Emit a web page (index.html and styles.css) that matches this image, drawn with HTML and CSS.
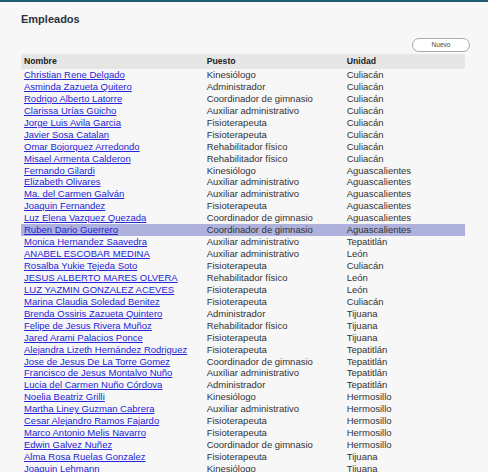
FILE: index.html
```html
<!DOCTYPE html>
<html lang="es">
<head>
<meta charset="utf-8">
<title>Empleados</title>
<link rel="stylesheet" href="styles.css">
</head>
<body>
<div class="topbar"></div>
<main class="content">
  <h1 class="title">Empleados</h1>
  <div class="toolbar"><button class="btn" type="button">Nuevo</button></div>
  <div class="grid">
    <div class="row head"><div>Nombre</div><div>Puesto</div><div>Unidad</div></div>
    <div class="row"><div><a href="#">Christian Rene Delgado</a></div><div>Kinesiólogo</div><div>Culiacán</div></div>
    <div class="row"><div><a href="#">Asminda Zazueta Quitero</a></div><div>Administrador</div><div>Culiacán</div></div>
    <div class="row"><div><a href="#">Rodrigo Alberto Latorre</a></div><div>Coordinador de gimnasio</div><div>Culiacán</div></div>
    <div class="row"><div><a href="#">Clarissa Urías Güicho</a></div><div>Auxiliar administrativo</div><div>Culiacán</div></div>
    <div class="row"><div><a href="#">Jorge Luis Avila Garcia</a></div><div>Fisioterapeuta</div><div>Culiacán</div></div>
    <div class="row"><div><a href="#">Javier Sosa Catalan</a></div><div>Fisioterapeuta</div><div>Culiacán</div></div>
    <div class="row"><div><a href="#">Omar Bojorquez Arredondo</a></div><div>Rehabilitador físico</div><div>Culiacán</div></div>
    <div class="row"><div><a href="#">Misael Armenta Calderon</a></div><div>Rehabilitador físico</div><div>Culiacán</div></div>
    <div class="row"><div><a href="#">Fernando Gilardi</a></div><div>Kinesiólogo</div><div>Aguascalientes</div></div>
    <div class="row"><div><a href="#">Elizabeth Olivares</a></div><div>Auxiliar administrativo</div><div>Aguascalientes</div></div>
    <div class="row"><div><a href="#">Ma. del Carmen Galván</a></div><div>Auxiliar administrativo</div><div>Aguascalientes</div></div>
    <div class="row"><div><a href="#">Joaquin Fernandez</a></div><div>Fisioterapeuta</div><div>Aguascalientes</div></div>
    <div class="row"><div><a href="#">Luz Elena Vazquez Quezada</a></div><div>Coordinador de gimnasio</div><div>Aguascalientes</div></div>
    <div class="row selected"><div><a href="#">Ruben Dario Guerrero</a></div><div>Coordinador de gimnasio</div><div>Aguascalientes</div></div>
    <div class="row"><div><a href="#">Monica Hernandez Saavedra</a></div><div>Auxiliar administrativo</div><div>Tepatitlán</div></div>
    <div class="row"><div><a href="#">ANABEL ESCOBAR MEDINA</a></div><div>Auxiliar administrativo</div><div>León</div></div>
    <div class="row"><div><a href="#">Rosalba Yukie Tejeda Soto</a></div><div>Fisioterapeuta</div><div>Culiacán</div></div>
    <div class="row"><div><a href="#">JESUS ALBERTO MARES OLVERA</a></div><div>Rehabilitador físico</div><div>León</div></div>
    <div class="row"><div><a href="#">LUZ YAZMIN GONZALEZ ACEVES</a></div><div>Fisioterapeuta</div><div>León</div></div>
    <div class="row"><div><a href="#">Marina Claudia Soledad Benitez</a></div><div>Fisioterapeuta</div><div>Culiacán</div></div>
    <div class="row"><div><a href="#">Brenda Ossiris Zazueta Quintero</a></div><div>Administrador</div><div>Tijuana</div></div>
    <div class="row"><div><a href="#">Felipe de Jesus Rivera Muñoz</a></div><div>Rehabilitador físico</div><div>Tijuana</div></div>
    <div class="row"><div><a href="#">Jared Arami Palacios Ponce</a></div><div>Fisioterapeuta</div><div>Tijuana</div></div>
    <div class="row"><div><a href="#">Alejandra Lizeth Hernández Rodriguez</a></div><div>Fisioterapeuta</div><div>Tepatitlán</div></div>
    <div class="row"><div><a href="#">Jose de Jesus De La Torre Gomez</a></div><div>Coordinador de gimnasio</div><div>Tepatitlán</div></div>
    <div class="row"><div><a href="#">Francisco de Jesus Montalvo Nuño</a></div><div>Auxiliar administrativo</div><div>Tepatitlán</div></div>
    <div class="row"><div><a href="#">Lucia del Carmen Nuño Córdova</a></div><div>Administrador</div><div>Tepatitlán</div></div>
    <div class="row"><div><a href="#">Noelia Beatriz Grilli</a></div><div>Kinesiólogo</div><div>Hermosillo</div></div>
    <div class="row"><div><a href="#">Martha Liney Guzman Cabrera</a></div><div>Auxiliar administrativo</div><div>Hermosillo</div></div>
    <div class="row"><div><a href="#">Cesar Alejandro Ramos Fajardo</a></div><div>Fisioterapeuta</div><div>Hermosillo</div></div>
    <div class="row"><div><a href="#">Marco Antonio Melis Navarro</a></div><div>Fisioterapeuta</div><div>Hermosillo</div></div>
    <div class="row"><div><a href="#">Edwin Galvez Nuñez</a></div><div>Coordinador de gimnasio</div><div>Hermosillo</div></div>
    <div class="row"><div><a href="#">Alma Rosa Ruelas Gonzalez</a></div><div>Fisioterapeuta</div><div>Tijuana</div></div>
    <div class="row"><div><a href="#">Joaquin Lehmann</a></div><div>Kinesiólogo</div><div>Tijuana</div></div>
  </div>
</main>
</body>
</html>
```

FILE: styles.css
```css
html, body {
  margin: 0;
  padding: 0;
  background: #f7f7f7;
  font-family: "Liberation Sans", Arial, sans-serif;
  color: #333;
}

.topbar {
  height: 2px;
  background: #1f5b73;
}

.content {
  padding: 0 18px 0 21px;
}

.title {
  margin: 11px 0 0 0;
  font-size: 11px;
  line-height: 13px;
  font-weight: bold;
  color: #2b3240;
}

.toolbar {
  display: flex;
  justify-content: flex-end;
  margin-top: 12px;
  height: 14px;
}

.btn {
  box-sizing: border-box;
  width: 58px;
  height: 14px;
  padding: 0;
  border: 1px solid #a8a8a8;
  border-radius: 7px;
  background: #fff;
  font-family: "Liberation Sans", Arial, sans-serif;
  font-size: 6.5px;
  line-height: 12px;
  color: #444;
}

.grid {
  margin-top: 2px;
  width: 444px;
}

.row {
  display: grid;
  grid-template-columns: 182.7px 140px 1fr;
  height: 11.95px;
  font-size: 9.5px;
  line-height: 11.95px;
  white-space: nowrap;
}

.row > div {
  padding-left: 3px;
  overflow: hidden;
}

.row.head {
  height: 15px;
  line-height: 15px;
  font-size: 8.7px;
  font-weight: bold;
  color: #222;
  background: #e6e6e6;
  border-radius: 0 2px 2px 0;
}

.row.selected {
  background: #adb1db;
}

.row a {
  color: #2424d8;
  text-decoration: underline;
}
```
